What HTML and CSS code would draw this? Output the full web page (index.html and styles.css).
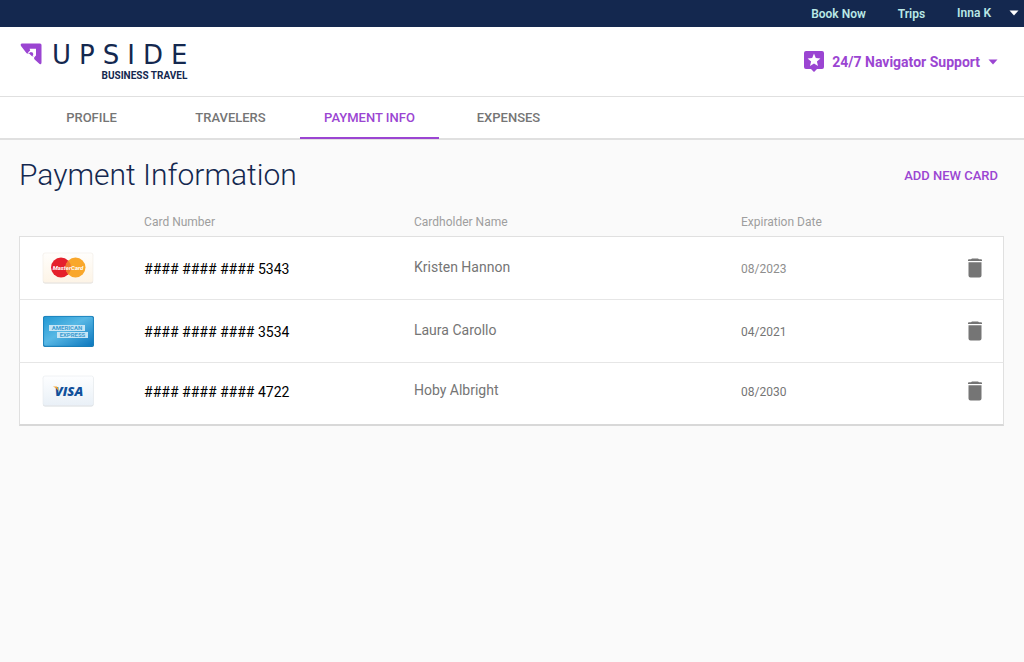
FILE: index.html
```html
<!DOCTYPE html>
<html lang="en">
<head>
<meta charset="utf-8">
<meta name="viewport" content="width=device-width, initial-scale=1">
<title>Payment Information</title>
<link rel="stylesheet" href="styles.css">
</head>
<body>
<nav class="topbar" aria-label="Account">
  <a class="topbar-link" href="#book">Book Now</a>
  <a class="topbar-link" href="#trips">Trips</a>
  <button class="topbar-user" type="button">Inna K
    <svg class="caret" viewBox="0 0 10 6" aria-hidden="true"><path d="M0.5 0.5H9.5L5 5.5Z"/></svg>
  </button>
</nav>

<header class="masthead">
  <a class="brand" href="#home">
    <svg class="brand-mark" viewBox="0 0 22 22" aria-hidden="true">
      <path d="M2 0.5H20Q21.5 0.5 21.5 2V19.5Q21.5 22 19.6 21L14.6 16.6Q13.8 15.6 14.2 14.6L15 13.2H12L8.8 10.2Q7.4 11 6.4 10L1 3Q0 0.7 2 0.5Z"/>
      <path class="brand-arrow" d="M9.6 5.8H16V12.4L14.4 14L12.6 12.4L13.4 11.2L12.6 9.4L10.8 9L8.8 10.2L8 9.6L10.2 7.6Z"/>
    </svg>
    <span class="brand-text">
      <span class="brand-name">UPSIDE</span>
      <span class="brand-tag">BUSINESS TRAVEL</span>
    </span>
  </a>
  <button class="support" type="button">
    <svg class="support-icon" viewBox="0 0 20 21" aria-hidden="true">
      <path d="M2 0H18Q20 0 20 2V16Q20 18 18 18H13L10 21L7 18H2Q0 18 0 16V2Q0 0 2 0Z"/>
      <path class="support-star" d="M10 2.6L11.8 7.1L16.4 7.4L12.9 10.4L14 15L10 12.5L6 15L7.1 10.4L3.6 7.4L8.2 7.1Z"/>
    </svg>
    24/7 Navigator Support
    <svg class="caret" viewBox="0 0 10 6" aria-hidden="true"><path d="M0.5 0.5H9.5L5 5.5Z"/></svg>
  </button>
</header>

<nav class="tabs" aria-label="Settings">
  <a class="tab" href="#profile">PROFILE</a>
  <a class="tab" href="#travelers">TRAVELERS</a>
  <a class="tab tab-active" href="#payment" aria-current="page">PAYMENT INFO</a>
  <a class="tab" href="#expenses">EXPENSES</a>
</nav>

<main class="content">
  <div class="heading">
    <h1 class="title">Payment Information</h1>
    <button class="add-card" type="button">ADD NEW CARD</button>
  </div>
  <table class="cards">
    <colgroup><col class="col-brand"><col class="col-number"><col class="col-name"><col class="col-date"><col class="col-action"></colgroup>
    <thead>
      <tr><td></td><th scope="col">Card Number</th><th scope="col">Cardholder Name</th><th scope="col">Expiration Date</th><td></td></tr>
    </thead>
    <tbody>
      <tr>
        <td class="brand-cell">
          <svg class="card-art" viewBox="0 0 52 32" role="img" aria-label="MasterCard">
            <defs><linearGradient id="cream" x2="0" y2="1"><stop offset="0" stop-color="#fffefc"/><stop offset="1" stop-color="#fdf4e6"/></linearGradient></defs>
            <rect x="1" y="1.6" width="50" height="30" rx="2" fill="#dedbd6"/>
            <rect x="1" y="1" width="50" height="29.6" rx="2" fill="url(#cream)" stroke="#f1ece5" stroke-width="0.6"/>
            <circle cx="19" cy="15.5" r="10" fill="#e5202c"/>
            <circle cx="33.5" cy="15.5" r="10" fill="#f9a72b"/>
            <path d="M26.2 8.6A10 10 0 0 1 26.2 22.4A10 10 0 0 1 26.2 8.6Z" fill="#ef7a30"/>
            <text class="mc-text" x="26" y="17.8" text-anchor="middle">MasterCard</text>
          </svg>
        </td>
        <td class="number">#### #### #### 5343</td>
        <td class="name">Kristen Hannon</td>
        <td class="date date-muted">08/2023</td>
        <td class="action"><button class="delete" type="button" aria-label="Delete card ending 5343"><svg class="trash" viewBox="0 0 16 20" aria-hidden="true"><path d="M5 0.4H11L12 1.2H14Q15 1.2 15 2V3H1V2Q1 1.2 2 1.2H4ZM1.5 4.2H14.5V17.5Q14.5 19.5 12.5 19.5H3.5Q1.5 19.5 1.5 17.5Z"/></svg></button></td>
      </tr>
      <tr>
        <td class="brand-cell">
          <svg class="card-art" viewBox="0 0 52 32" role="img" aria-label="American Express">
            <defs>
              <linearGradient id="amex" x2="1" y2="1"><stop offset="0" stop-color="#2399d3"/><stop offset="0.45" stop-color="#58b8e5"/><stop offset="1" stop-color="#0b76bd"/></linearGradient>
            </defs>
            <rect x="1" y="1" width="51" height="31" rx="2" fill="#1672a8"/>
            <rect x="1.6" y="1.4" width="49.8" height="29.8" rx="2" fill="url(#amex)" stroke="#1d87c1" stroke-width="0.8"/>
            <rect x="7" y="10" width="36" height="6" fill="#c6e5f5"/>
            <rect x="15" y="17" width="31" height="6" fill="#c6e5f5"/>
            <text class="amex-text" x="25" y="15.4" text-anchor="middle">AMERICAN</text>
            <text class="amex-text" x="30.5" y="22.4" text-anchor="middle">EXPRESS</text>
          </svg>
        </td>
        <td class="number">#### #### #### 3534</td>
        <td class="name">Laura Carollo</td>
        <td class="date">04/2021</td>
        <td class="action"><button class="delete" type="button" aria-label="Delete card ending 3534"><svg class="trash" viewBox="0 0 16 20" aria-hidden="true"><path d="M5 0.4H11L12 1.2H14Q15 1.2 15 2V3H1V2Q1 1.2 2 1.2H4ZM1.5 4.2H14.5V17.5Q14.5 19.5 12.5 19.5H3.5Q1.5 19.5 1.5 17.5Z"/></svg></button></td>
      </tr>
      <tr>
        <td class="brand-cell">
          <svg class="card-art" viewBox="0 0 52 32" role="img" aria-label="Visa">
            <defs><linearGradient id="frost" x2="0" y2="1"><stop offset="0" stop-color="#fdfeff"/><stop offset="1" stop-color="#e9f0f7"/></linearGradient></defs>
            <rect x="1" y="1.6" width="50.5" height="30" rx="2" fill="#d6dbe0"/>
            <rect x="1" y="1" width="50.5" height="29.6" rx="2" fill="url(#frost)" stroke="#e7ebef" stroke-width="0.6"/>
            <text class="visa-text" x="27" y="21" text-anchor="middle">VISA</text>
            <path d="M11 11.6H14.5Q15.8 11.7 16 13L16.6 16Q14.6 13 11 11.6Z" fill="#f3a32f"/>
          </svg>
        </td>
        <td class="number">#### #### #### 4722</td>
        <td class="name">Hoby Albright</td>
        <td class="date">08/2030</td>
        <td class="action"><button class="delete" type="button" aria-label="Delete card ending 4722"><svg class="trash" viewBox="0 0 16 20" aria-hidden="true"><path d="M5 0.4H11L12 1.2H14Q15 1.2 15 2V3H1V2Q1 1.2 2 1.2H4ZM1.5 4.2H14.5V17.5Q14.5 19.5 12.5 19.5H3.5Q1.5 19.5 1.5 17.5Z"/></svg></button></td>
      </tr>
    </tbody>
  </table>
</main>
</body>
</html>
```
FILE: styles.css
```css
* { box-sizing: border-box; }

body {
  margin: 0;
  background: #fafafa;
  color: #757575;
  font-family: Roboto, "Liberation Sans", sans-serif;
  font-size: 14px;
}

a { color: inherit; text-decoration: none; }

button {
  padding: 0;
  border: 0;
  background: none;
  color: inherit;
  font: inherit;
  cursor: pointer;
}

svg { display: block; fill: currentColor; }

.caret { width: 10px; height: 6px; }

.topbar {
  display: flex;
  justify-content: flex-end;
  align-items: center;
  gap: 32px;
  height: 27px;
  padding: 0 5px;
  background: #14284f;
  color: #b9e8e6;
  font-size: 12px;
  font-weight: 600;
}

.topbar-user { display: flex; align-items: center; gap: 18px; padding-bottom: 2px; }
.topbar-user .caret { color: #fff; }

.masthead {
  display: flex;
  justify-content: space-between;
  align-items: center;
  height: 70px;
  padding: 0 26px 0 20px;
  background: #fff;
  border-bottom: 1px solid #e0e0e0;
}

.brand { display: flex; gap: 10px; color: #14284f; }
.brand-mark { width: 22px; height: 22px; margin-top: 2px; color: #9b45d2; }
.brand-arrow { fill: #fff; }
.brand-text { display: flex; flex-direction: column; align-items: flex-end; }
.brand-name { margin-right: -8px; font-family: "DejaVu Sans", sans-serif; font-size: 26px; line-height: 28px; letter-spacing: 8px; }
.brand-tag { font-size: 10px; font-weight: 700; line-height: 14px; }

.support {
  display: flex;
  align-items: center;
  gap: 8px;
  color: #9b45d2;
  font-size: 14px;
  font-weight: 700;
}
.support-icon { width: 20px; height: 21px; }
.support-star { fill: #fff; }

.tabs {
  display: flex;
  height: 43px;
  padding-left: 22px;
  background: #fff;
  border-bottom: 2px solid #e0e0e0;
}
.tab {
  width: 139px;
  height: 42px;
  border-bottom: 2px solid transparent;
  font-size: 13px;
  font-weight: 500;
  line-height: 42px;
  text-align: center;
}
.tab-active { color: #9b45d2; border-bottom-color: #9b45d2; }

.content { padding: 16px 20px 16px 19px; }

.heading {
  display: flex;
  justify-content: space-between;
  align-items: center;
  padding-right: 6px;
}
.title { margin: 0; color: #14284f; font-size: 30px; font-weight: 300; line-height: 38px; }
.add-card { color: #9b45d2; font-size: 13px; font-weight: 500; }

.cards { width: 100%; margin-top: 14px; border-collapse: separate; border-spacing: 0; table-layout: fixed; }
.col-brand { width: 12.7%; }
.col-number { width: 27.4%; }
.col-name { width: 33.2%; }
.col-action { width: 8%; }

.cards td { padding: 0; }
.cards th {
  height: 28px;
  padding: 0;
  color: #9e9e9e;
  font-size: 12px;
  font-weight: 400;
  text-align: left;
}

.cards tbody td { height: 63px; background: #fff; border-bottom: 1px solid #e6e6e6; }
.cards tbody tr:first-child td { height: 64px; border-top: 1px solid #e0e0e0; }
.cards tbody td:first-child { border-left: 1px solid #e0e0e0; }
.cards tbody td:last-child { border-right: 1px solid #e0e0e0; }
.cards .number { padding-top: 2px; }
.cards .date { padding-top: 2px; }
.cards .name { padding-bottom: 2px; }
.cards tbody tr:last-child td { padding-bottom: 5px; border-bottom: 2px solid #d8d8d8; }
.cards tbody tr:last-child .name { padding-bottom: 8px; }

.cards .brand-cell { padding-left: 22px; }
.card-art { width: 52px; height: 32px; }
.mc-text { fill: #fff; font: italic 700 6px Roboto, sans-serif; }
.amex-text { fill: #3b9bd0; font: 700 6px Roboto, sans-serif; }
.visa-text { fill: #11509b; font: italic 800 13px "Open Sans", sans-serif; }

.cards .number { color: #000; }
.cards .date { font-size: 12px; }
.cards .date-muted { color: #8e8e8e; }
.delete { display: block; margin-left: auto; margin-right: 20px; }
.trash { width: 16px; height: 20px; color: #757575; }
```
